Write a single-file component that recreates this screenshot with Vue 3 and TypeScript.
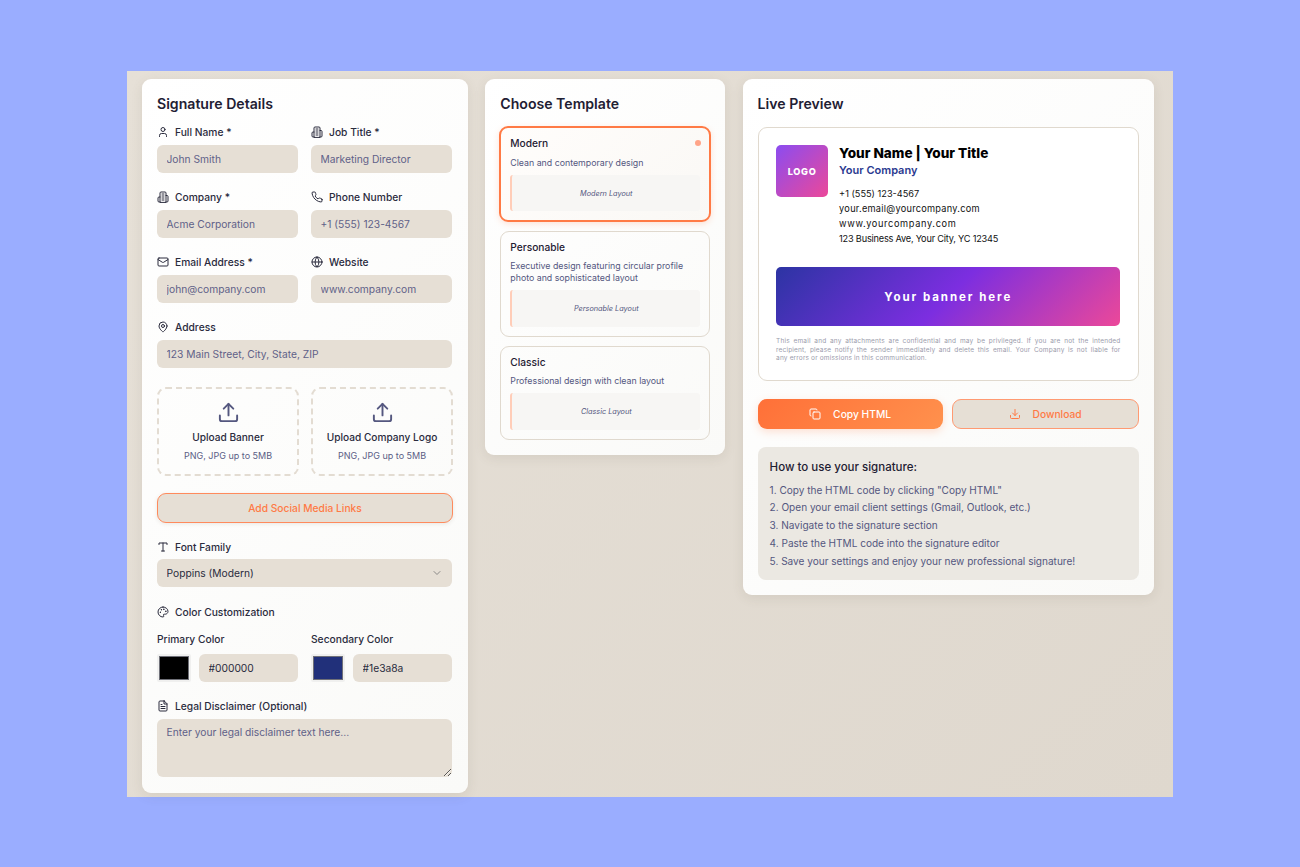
<template>
  <div class="page">
    <div class="frame">
      <!-- details form -->
      <section class="card details">
        <h2>Signature Details</h2>
        <div class="form-grid">
          <div v-for="f in fields" :key="f.label" class="field" :class="{ full: f.full }">
            <label>
              <svg class="ico" viewBox="0 0 24 24" v-html="icons[f.icon]"></svg>
              {{ f.label }}
            </label>
            <input type="text" :placeholder="f.placeholder" />
          </div>
        </div>

        <div class="uploads">
          <div v-for="u in uploads" :key="u" class="upload">
            <svg class="upload-ico" viewBox="0 0 24 24" v-html="icons.upload"></svg>
            <div class="upload-title">{{ u }}</div>
            <div class="upload-sub">PNG, JPG up to 5MB</div>
          </div>
        </div>

        <button class="social">Add Social Media Links</button>

        <div class="field font-field">
          <label><svg class="ico" viewBox="0 0 24 24" v-html="icons.type"></svg>Font Family</label>
          <div class="select-wrap">
            <select>
              <option>Poppins (Modern)</option>
            </select>
            <svg class="chev" viewBox="0 0 24 24" v-html="icons.chevron"></svg>
          </div>
        </div>

        <div class="field color-head">
          <label><svg class="ico" viewBox="0 0 24 24" v-html="icons.palette"></svg>Color Customization</label>
        </div>
        <div class="colors">
          <div v-for="c in colors" :key="c.label" class="color-field">
            <div class="color-label">{{ c.label }}</div>
            <div class="color-row">
              <input type="color" :value="c.swatch" />
              <input type="text" class="hex" :value="c.value" />
            </div>
          </div>
        </div>

        <div class="field legal">
          <label><svg class="ico" viewBox="0 0 24 24" v-html="icons.file"></svg>Legal Disclaimer (Optional)</label>
          <textarea placeholder="Enter your legal disclaimer text here..."></textarea>
        </div>
      </section>

      <!-- template picker -->
      <section class="card templates">
        <h2>Choose Template</h2>
        <div class="tpl-list">
          <div v-for="(t, i) in templates" :key="t.name" class="tpl" :class="{ active: i === 0 }">
            <div class="tpl-name">{{ t.name }}</div>
            <span v-if="i === 0" class="dot"></span>
            <p>{{ t.desc }}</p>
            <div class="tpl-preview">{{ t.name }} Layout</div>
          </div>
        </div>
      </section>

      <!-- preview -->
      <section class="card preview">
        <h2>Live Preview</h2>
        <div class="sig">
          <div class="sig-top">
            <div class="logo">LOGO</div>
            <div class="sig-info">
              <div class="sig-name">Your Name | Your Title</div>
              <div class="sig-company">Your Company</div>
              <div class="sig-lines">
                <div>+1 (555) 123-4567</div>
                <div class="line-email">your.email@yourcompany.com</div>
                <div class="line-web">www.yourcompany.com</div>
                <div class="line-addr">123 Business Ave, Your City, YC 12345</div>
              </div>
            </div>
          </div>
          <div class="banner">Your banner here</div>
          <p class="disclaimer">
            This email and any attachments are confidential and may be privileged. If you are not the intended
            recipient, please notify the sender immediately and delete this email. Your Company is not liable for
            any&nbsp;errors or omissions in this communication.
          </p>
        </div>
        <div class="actions">
          <button class="btn primary">
            <svg class="btn-ico" viewBox="0 0 24 24" v-html="icons.copy"></svg>Copy HTML
          </button>
          <button class="btn secondary">
            <svg class="btn-ico" viewBox="0 0 24 24" v-html="icons.download"></svg>Download
          </button>
        </div>
        <div class="howto">
          <h3>How to use your signature:</h3>
          <div v-for="(s, i) in steps" :key="i" class="step">{{ i + 1 }}. {{ s }}</div>
        </div>
      </section>
    </div>
  </div>
</template>

<script setup lang="ts">
const building =
  '<path d="M6 22V4a2 2 0 0 1 2-2h8a2 2 0 0 1 2 2v18Z"/><path d="M6 12H4a2 2 0 0 0-2 2v6a2 2 0 0 0 2 2h2"/><path d="M18 9h2a2 2 0 0 1 2 2v9a2 2 0 0 1-2 2h-2"/><path d="M10 6h4M10 10h4M10 14h4M10 18h4"/>';

const icons: Record<string, string> = {
  user: '<path d="M19 21v-2a4 4 0 0 0-4-4H9a4 4 0 0 0-4 4v2"/><circle cx="12" cy="7" r="4"/>',
  building,
  phone:
    '<path d="M22 16.92v3a2 2 0 0 1-2.18 2 19.79 19.79 0 0 1-8.63-3.07 19.5 19.5 0 0 1-6-6 19.79 19.79 0 0 1-3.07-8.67A2 2 0 0 1 4.11 2h3a2 2 0 0 1 2 1.72 12.84 12.84 0 0 0 .7 2.81 2 2 0 0 1-.45 2.11L8.09 9.91a16 16 0 0 0 6 6l1.27-1.27a2 2 0 0 1 2.11-.45 12.84 12.84 0 0 0 2.81.7A2 2 0 0 1 22 16.92z"/>',
  mail: '<rect x="2" y="4" width="20" height="16" rx="2"/><path d="m22 7-8.97 5.7a1.94 1.94 0 0 1-2.06 0L2 7"/>',
  globe: '<circle cx="12" cy="12" r="10"/><path d="M12 2a14.5 14.5 0 0 0 0 20 14.5 14.5 0 0 0 0-20"/><path d="M2 12h20"/>',
  pin: '<path d="M20 10c0 6-8 12-8 12s-8-6-8-12a8 8 0 0 1 16 0Z"/><circle cx="12" cy="10" r="3"/>',
  upload: '<path d="M21 15v4a2 2 0 0 1-2 2H5a2 2 0 0 1-2-2v-4"/><path d="M17 8l-5-5-5 5"/><path d="M12 3v12"/>',
  type: '<path d="M4 7V4h16v3"/><path d="M9 20h6"/><path d="M12 4v16"/>',
  palette:
    '<circle cx="13.5" cy="6.5" r=".5" fill="currentColor"/><circle cx="17.5" cy="10.5" r=".5" fill="currentColor"/><circle cx="8.5" cy="7.5" r=".5" fill="currentColor"/><circle cx="6.5" cy="12.5" r=".5" fill="currentColor"/><path d="M12 2C6.5 2 2 6.5 2 12s4.5 10 10 10c.926 0 1.648-.746 1.648-1.688 0-.437-.18-.835-.437-1.125-.29-.289-.438-.652-.438-1.125a1.64 1.64 0 0 1 1.668-1.668h1.996c3.051 0 5.555-2.503 5.555-5.554C21.965 6.012 17.461 2 12 2z"/>',
  file: '<path d="M14.5 2H6a2 2 0 0 0-2 2v16a2 2 0 0 0 2 2h12a2 2 0 0 0 2-2V7.5L14.5 2z"/><path d="M14 2v6h6"/><path d="M16 13H8M16 17H8M10 9H8"/>',
  copy: '<rect x="8" y="8" width="14" height="14" rx="2"/><path d="M4 16c-1.1 0-2-.9-2-2V4c0-1.1.9-2 2-2h10c1.1 0 2 .9 2 2"/>',
  download: '<path d="M21 15v4a2 2 0 0 1-2 2H5a2 2 0 0 1-2-2v-4"/><path d="M7 10l5 5 5-5"/><path d="M12 15V3"/>',
  chevron: '<path d="m6 9 6 6 6-6"/>',
};

const fields = [
  { label: 'Full Name *', icon: 'user', placeholder: 'John Smith' },
  { label: 'Job Title *', icon: 'building', placeholder: 'Marketing Director' },
  { label: 'Company *', icon: 'building', placeholder: 'Acme Corporation' },
  { label: 'Phone Number', icon: 'phone', placeholder: '+1 (555) 123-4567' },
  { label: 'Email Address *', icon: 'mail', placeholder: 'john@company.com' },
  { label: 'Website', icon: 'globe', placeholder: 'www.company.com' },
  { label: 'Address', icon: 'pin', placeholder: '123 Main Street, City, State, ZIP', full: true },
];

const uploads = ['Upload Banner', 'Upload Company Logo'];

const colors = [
  { label: 'Primary Color', value: '#000000', swatch: '#000000' },
  { label: 'Secondary Color', value: '#1e3a8a', swatch: '#21307a' },
];

const templates = [
  { name: 'Modern', desc: 'Clean and contemporary design' },
  { name: 'Personable', desc: 'Executive design featuring circular profile photo and sophisticated layout' },
  { name: 'Classic', desc: 'Professional design with clean layout' },
];

const steps = [
  'Copy the HTML code by clicking "Copy HTML"',
  'Open your email client settings (Gmail, Outlook, etc.)',
  'Navigate to the signature section',
  'Paste the HTML code into the signature editor',
  'Save your settings and enjoy your new professional signature!',
];
</script>

<style>
html,
body {
  margin: 0;
  background: #9aadff;
}
</style>

<style scoped>
* {
  box-sizing: border-box;
}

.page {
  height: 867px;
  padding: 71px 127px 70px;
  font-family: Inter, 'Liberation Sans', sans-serif;
  color: #1f2033;
}

.frame {
  height: 726px;
  padding: 8px 15px 0;
  display: grid;
  grid-template-columns: 326px 240px 411.4px;
  column-gap: 17.3px;
  align-items: start;
  background: linear-gradient(135deg, #e6e0d7, #dfd8ce);
}

.card {
  background: linear-gradient(135deg, #ffffff, #fafaf8);
  border-radius: 9px;
  padding: 15px;
  box-shadow: 0 3px 12px rgba(90, 80, 60, 0.1);
}

h2 {
  margin: 0;
  font-size: 14.1px;
  line-height: 20px;
  font-weight: 600;
  color: #1f2033;
}

/* form */
.details {
  height: 714px;
}

.form-grid {
  margin-top: 11px;
  display: grid;
  grid-template-columns: 141px 141px;
  column-gap: 13px;
  row-gap: 17px;
}

.full {
  grid-column: 1 / 3;
}

.field label {
  display: flex;
  align-items: center;
  gap: 6px;
  height: 14px;
  margin-bottom: 6px;
  font-size: 10.25px;
  font-weight: 500;
  color: #2a2b3d;
}

.ico {
  width: 12px;
  height: 12px;
  flex: none;
  fill: none;
  stroke: #2a2b3d;
  stroke-width: 2;
  stroke-linecap: round;
  stroke-linejoin: round;
}

input[type='text'],
select,
textarea {
  display: block;
  width: 100%;
  height: 28px;
  padding: 0 9.5px;
  border: 0;
  outline: 0;
  border-radius: 6px;
  background: #e6dfd5;
  font-family: inherit;
  font-size: 10.25px;
  color: #2a2b3d;
}

input::placeholder,
textarea::placeholder {
  color: #5f6188;
  opacity: 1;
}

.uploads {
  margin-top: 19px;
  display: grid;
  grid-template-columns: 142px 142px;
  column-gap: 12px;
}

.upload {
  height: 89px;
  border: 2px dashed #e3dcd2;
  border-radius: 9px;
  display: flex;
  flex-direction: column;
  align-items: center;
  padding-top: 12px;
}

.upload-ico {
  width: 23px;
  height: 23px;
  fill: none;
  stroke: #54577f;
  stroke-width: 2;
  stroke-linecap: round;
  stroke-linejoin: round;
}

.upload-title {
  margin-top: 5.5px;
  font-size: 10.15px;
  line-height: 14px;
  font-weight: 500;
  color: #2a2b3d;
}

.upload-sub {
  margin-top: 6px;
  font-size: 9px;
  line-height: 12px;
  color: #5b5d85;
}

.social {
  display: block;
  width: 100%;
  height: 30px;
  margin-top: 17px;
  border: 1px solid #ff8a5c;
  border-radius: 9px;
  background: #e6dfd5;
  color: #ff7a45;
  font-family: inherit;
  font-size: 10.25px;
  font-weight: 500;
  box-shadow: 0 1px 4px rgba(90, 80, 60, 0.12);
}

.font-field {
  margin-top: 17px;
  padding-right: 1px;
}

.font-field label {
  margin-bottom: 5px;
}

.select-wrap {
  position: relative;
}

select {
  appearance: none;
}

.chev {
  position: absolute;
  right: 9px;
  top: 8px;
  width: 12px;
  height: 12px;
  fill: none;
  stroke: #8a8987;
  stroke-width: 2;
  stroke-linecap: round;
  stroke-linejoin: round;
}

.color-head {
  margin-top: 18px;
}

.colors {
  margin-top: 13px;
  display: grid;
  grid-template-columns: 141px 141px;
  column-gap: 13px;
}

.color-label {
  font-size: 10.25px;
  line-height: 14px;
  font-weight: 500;
  color: #2a2b3d;
  margin-bottom: 8px;
}

.color-row {
  display: flex;
  gap: 8px;
}

input[type='color'] {
  width: 34px;
  height: 28px;
  flex: none;
  padding: 2px;
  border: 0;
  background: #f0f0ef;
  border-radius: 2px;
}

input[type='color']::-webkit-color-swatch-wrapper {
  padding: 0;
}

input[type='color']::-webkit-color-swatch {
  border: 1px solid #6f7078;
  border-radius: 0;
}

.hex {
  flex: 1;
  min-width: 0;
}

.legal {
  margin-top: 17px;
  padding-right: 1px;
}

textarea {
  height: 58px;
  padding: 7px 9.5px;
  resize: vertical;
}

/* templates */
.templates {
  height: 376px;
}

.tpl-list {
  margin-top: 13px;
  display: flex;
  flex-direction: column;
  gap: 9px;
}

.tpl {
  position: relative;
  padding: 8px 9px 9px;
  border: 1px solid #e0d9ce;
  border-radius: 9px;
}

.tpl.active {
  border: 2px solid #ff7a45;
  padding: 8px 9px 9px;
  margin: -1px -1px 0;
  background: linear-gradient(135deg, #fffdfb, #faf8f5);
  box-shadow: 0 2px 6px rgba(255, 122, 69, 0.2);
}

.tpl.active p {
  margin: 7px 0 6px;
}

.tpl.active .tpl-preview {
  height: 36px;
}

.tpl-name {
  font-size: 10.2px;
  line-height: 14px;
  font-weight: 500;
  color: #1f2033;
}

.dot {
  position: absolute;
  top: 12px;
  right: 8px;
  width: 6px;
  height: 6px;
  border-radius: 50%;
  background: #ffa488;
}

.tpl p {
  margin: 6px 0 6px;
  font-size: 8.8px;
  line-height: 12px;
  color: #54577f;
}

.tpl-preview {
  height: 37px;
  display: flex;
  align-items: center;
  justify-content: center;
  border-left: 2px solid #ffcdb8;
  border-radius: 3px;
  background: #f7f6f4;
  font-size: 7.3px;
  font-style: italic;
  color: #54577f;
}

/* preview */
.preview {
  height: 516px;
}

.sig {
  height: 254px;
  margin-top: 13px;
  padding: 17px 17.5px 0;
  border: 1px solid #e0d9ce;
  border-radius: 9px;
  background: #fff;
}

.sig-top {
  display: flex;
  gap: 11px;
  height: 104px;
}

.logo {
  width: 52px;
  height: 52px;
  flex: none;
  border-radius: 5px;
  display: flex;
  align-items: center;
  justify-content: center;
  background: linear-gradient(135deg, #8b4cf0, #ec4899);
  color: #fff;
  font-size: 9.2px;
  font-weight: 800;
  letter-spacing: 0.7px;
}

.sig-name {
  font-size: 13.6px;
  line-height: 16px;
  font-weight: 800;
  color: #000;
}

.sig-company {
  margin-top: 2px;
  font-size: 11px;
  line-height: 15px;
  font-weight: 600;
  color: #2a3a90;
}

.sig-lines {
  margin-top: 8px;
  font-size: 9.2px;
  line-height: 15px;
  color: #111;
}

.line-email {
  letter-spacing: 0.27px;
}

.line-web {
  letter-spacing: 0.65px;
}

.line-addr {
  letter-spacing: -0.21px;
}

.banner {
  height: 59px;
  margin-top: 18px;
  border-radius: 5px;
  display: flex;
  align-items: center;
  justify-content: center;
  background: linear-gradient(135deg, #2c34a3, #7c2ee0 50%, #ec4899);
  color: #fff;
  font-size: 11.5px;
  font-weight: 700;
  letter-spacing: 1.95px;
}

.disclaimer {
  margin: 11px 0 0;
  font-size: 6.5px;
  line-height: 8.6px;
  letter-spacing: 0.17px;
  text-align: justify;
  color: #9a9bab;
}

.actions {
  margin-top: 18px;
  display: grid;
  grid-template-columns: 185px 187px;
  column-gap: 9px;
}

.btn {
  height: 29.5px;
  display: flex;
  align-items: center;
  justify-content: center;
  border-radius: 9px;
  font-family: inherit;
  font-size: 10.25px;
  font-weight: 500;
}

.btn-ico {
  width: 12px;
  height: 12px;
  margin-right: 12px;
  fill: none;
  stroke: currentColor;
  stroke-width: 2;
  stroke-linecap: round;
  stroke-linejoin: round;
}

.primary {
  border: 0;
  color: #fff;
  background: linear-gradient(135deg, #ff7038, #ff914d);
  box-shadow: 0 3px 8px rgba(255, 122, 69, 0.22);
}

.secondary {
  border: 1px solid #ff9a72;
  color: #ff7a45;
  background: #e6dfd5;
}

.howto {
  height: 133px;
  margin-top: 18px;
  padding: 13px 12px;
  border-radius: 8px;
  background: #ebe8e2;
}

h3 {
  margin: 0 0 8px;
  font-size: 11.5px;
  line-height: 14px;
  font-weight: 500;
  color: #1f2033;
}

.step {
  font-size: 10.05px;
  line-height: 17.8px;
  color: #54577f;
}
</style>
